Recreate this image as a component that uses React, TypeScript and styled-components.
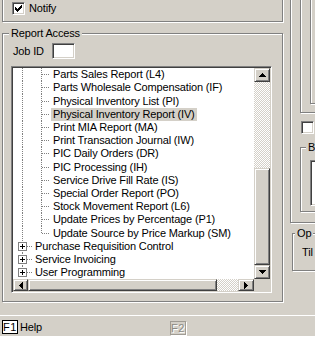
import * as React from 'react';
import styled, { createGlobalStyle, css } from 'styled-components';

const GlobalStyle = createGlobalStyle`
  html, body {
    margin: 0;
    padding: 0;
    background: #fff;
  }
  body {
    font-family: "Liberation Sans", Arial, sans-serif;
    font-size: 11px;
    letter-spacing: -0.15px;
    color: #000;
  }
`;

const FACE = '#d4d0c8';

const Window = styled.div`
  width: 315px;
  height: 336px;
  overflow: hidden;
  background: ${FACE};
  display: flex;
  flex-direction: column;
`;

const Main = styled.div`
  height: 315px;
  flex: none;
  display: flex;
`;

const LeftCol = styled.div`
  width: 285px;
  flex: none;
  display: flex;
  flex-direction: column;
  padding-left: 2px;
  box-sizing: border-box;
`;

const RightCol = styled.div`
  flex: 1;
  overflow: hidden;
  display: flex;
  flex-direction: column;
  padding-left: 5px;
`;

// etched group frame (dark line + white line)
const Etched = styled.div<{ $w: number; $h: number }>`
  position: relative;
  box-sizing: border-box;
  flex: none;
  width: ${p => p.$w}px;
  height: ${p => p.$h}px;
  border: 1px solid #808080;
  box-shadow: inset 1px 1px #fff, 1px 1px #fff;
`;

const GroupLabel = styled.span<{ $left: number }>`
  position: absolute;
  top: -7px;
  left: ${p => p.$left}px;
  padding: 0 2px;
  line-height: 13px;
  background: ${FACE};
  white-space: nowrap;
`;

const sunken = css`
  box-sizing: border-box;
  border: 1px solid;
  border-color: #808080 #fff #fff #808080;
  box-shadow: inset 1px 1px #404040, inset -1px -1px ${FACE};
`;

const raised = css`
  box-sizing: border-box;
  background: ${FACE};
  border: 1px solid;
  border-color: ${FACE} #404040 #404040 ${FACE};
  box-shadow: inset 1px 1px #fff, inset -1px -1px #808080;
`;

const dither = css`
  background-color: #fff;
  background-image: repeating-conic-gradient(${FACE} 0% 25%, #fff 0% 50%);
  background-size: 2px 2px;
`;

/* ---- top group ---- */
const NotifyGroup = styled(Etched)`
  margin-top: -12px;
  padding: 13px 0 0 9px;
`;

const CheckRow = styled.div`
  display: flex;
  align-items: center;
  gap: 4px;
  height: 13px;
  line-height: 13px;
`;

const CheckBox = styled.span<{ $mt?: number; $ml?: number }>`
  ${sunken};
  display: flex;
  align-items: center;
  justify-content: center;
  flex: none;
  width: 13px;
  height: 13px;
  margin-top: ${p => p.$mt || 0}px;
  margin-left: ${p => p.$ml || 0}px;
  background-color: #fff;
`;

/* ---- report access ---- */
const ReportGroup = styled(Etched)`
  margin-top: 11px;
  padding: 9px 0 0 8px;
  display: flex;
  flex-direction: column;
`;

const JobRow = styled.div`
  display: flex;
  align-items: center;
  height: 16px;
`;

const JobLabel = styled.span`
  width: 39px;
  margin-left: 2px;
  line-height: 13px;
`;

const JobInput = styled.div`
  ${sunken};
  width: 23px;
  height: 16px;
  background-color: #fff;
`;

const Tree = styled.div`
  ${sunken};
  margin-top: 7px;
  width: 261px;
  height: 227px;
  padding: 1px;
  background-color: ${FACE};
  display: grid;
  grid-template-columns: 1fr 16px;
  grid-template-rows: 1fr 12px;
`;

const TreeBody = styled.div`
  background: #fff;
  overflow: hidden;
  display: flex;
  flex-direction: column;
`;

const Row = styled.div<{ $h: number }>`
  height: ${p => p.$h}px;
  flex: none;
  display: flex;
  white-space: nowrap;
`;

const Guide = styled.div<{ $w: number; $rh: number; $v: 'full' | 'top'; $hline?: boolean }>`
  position: relative;
  flex: none;
  width: ${p => p.$w}px;

  &::before {
    content: '';
    position: absolute;
    left: 9px;
    top: 0;
    width: 1px;
    height: ${p => (p.$v === 'full' ? `${p.$rh}px` : `${Math.floor(p.$rh / 2) + 1}px`)};
    background-image: linear-gradient(#808080 50%, transparent 50%);
    background-size: 1px 2px;
  }

  &::after {
    content: '';
    display: ${p => (p.$hline ? 'block' : 'none')};
    position: absolute;
    left: 10px;
    right: 1px;
    top: ${p => Math.floor(p.$rh / 2)}px;
    height: 1px;
    background-image: linear-gradient(to right, #808080 50%, transparent 50%);
    background-size: 2px 1px;
  }
`;

const PlusBox = styled.span<{ $rh: number }>`
  position: absolute;
  left: 5px;
  top: ${p => Math.floor(p.$rh / 2) - 4}px;
  width: 9px;
  height: 9px;
  box-sizing: border-box;
  border: 1px solid #808080;
  background: #fff;
  z-index: 1;
  display: flex;
`;

const ItemLabel = styled.span<{ $selected?: boolean }>`
  align-self: center;
  height: 13px;
  line-height: 13px;
  padding: 0 2px;
  background: ${p => (p.$selected ? FACE : 'transparent')};
`;

const VScroll = styled.div`
  display: flex;
  flex-direction: column;
`;

const HScroll = styled.div`
  display: flex;
`;

const ScrollButton = styled.div<{ $w: number; $h: number }>`
  ${raised};
  flex: none;
  width: ${p => p.$w}px;
  height: ${p => p.$h}px;
  display: flex;
  align-items: center;
  justify-content: center;
`;

const Thumb = styled.div<{ $w?: number; $h?: number }>`
  ${raised};
  flex: none;
  width: ${p => (p.$w ? `${p.$w}px` : 'auto')};
  height: ${p => (p.$h ? `${p.$h}px` : 'auto')};
`;

const Track = styled.div`
  ${dither};
  flex: 1;
`;

const Corner = styled.div`
  background: ${FACE};
`;

/* ---- right column ---- */
const OuterBox = styled(Etched)`
  margin-top: -10px;
  padding-left: 9px;
  display: flex;
  flex-direction: column;
`;

const PanelBox = styled(Etched)`
  padding-left: 9px;
`;

const BGroup = styled(Etched)`
  margin-top: 13px;
  padding: 12px 0 0 9px;
`;

const Field = styled.div<{ $w: number; $h: number }>`
  ${sunken};
  width: ${p => p.$w}px;
  height: ${p => p.$h}px;
  background-color: #fff;
`;

const OpGroup = styled(Etched)`
  margin-top: 10px;
  margin-left: 2px;
  padding: 12px 0 0 9px;
  line-height: 13px;
`;

/* ---- status bar ---- */
const Separator = styled.div`
  height: 1px;
  flex: none;
  background: #fff;
`;

const StatusBar = styled.div`
  height: 20px;
  flex: none;
  display: flex;
  align-items: flex-start;
  padding-left: 2px;
`;

const KeyHint = styled.div`
  width: 168px;
  display: flex;
  align-items: center;
  margin-top: 4px;
`;

const KeyCap = styled.span<{ $disabled?: boolean }>`
  box-sizing: border-box;
  width: 16px;
  height: 14px;
  display: flex;
  align-items: center;
  justify-content: center;
  line-height: 12px;
  letter-spacing: 0.5px;
  border: 1px solid ${p => (p.$disabled ? '#a09c94' : '#000')};
  background: ${p => (p.$disabled ? FACE : '#fff')};
  color: ${p => (p.$disabled ? '#8c8a84' : '#000')};
  text-shadow: ${p => (p.$disabled ? '1px 1px #fff' : 'none')};
  box-shadow: ${p => (p.$disabled ? '1px 1px #fff' : 'none')};
  margin-top: ${p => (p.$disabled ? '5px' : '0')};
`;

const HintText = styled.span`
  margin-left: 2px;
  line-height: 13px;
`;

const arrows = {
  up: { w: 7, h: 4, d: 'M3 0h1v1h1v1h1v1h1v1H0V3h1V2h1V1h1z' },
  down: { w: 7, h: 4, d: 'M0 0h7v1H6v1H5v1H4v1H3V3H2V2H1V1H0z' },
  left: { w: 4, h: 7, d: 'M3 0h1v7H3V6H2V5H1V4H0V3h1V2h1V1h1z' },
  right: { w: 4, h: 7, d: 'M0 0h1v1h1v1h1v1h1v1H3v1H2v1H1v1H0z' },
};

const Arrow = ({ dir }: { dir: keyof typeof arrows }) => {
  const a = arrows[dir];
  return (
    <svg width={a.w} height={a.h} viewBox={`0 0 ${a.w} ${a.h}`} shapeRendering="crispEdges">
      <path d={a.d} fill="#000" />
    </svg>
  );
};

const CheckMark = () => (
  <svg width="7" height="7" viewBox="0 0 7 7" shapeRendering="crispEdges">
    <path d="M6 0h1v3H6v1H5v1H4v1H3v1H2V6H1V5H0V2h1v1h1v1h1V3h1V2h1V1h1z" fill="#000" />
  </svg>
);

const Plus = () => (
  <svg width="7" height="7" viewBox="0 0 7 7" shapeRendering="crispEdges">
    <path d="M1 3h5v1H1zM3 1h1v5H3z" fill="#000" />
  </svg>
);

interface TreeItem {
  label: string;
  depth: number;
  last?: boolean;
  expandable?: boolean;
  selected?: boolean;
}

const items: TreeItem[] = [
  { label: 'Parts Sales Report (L4)', depth: 1 },
  { label: 'Parts Wholesale Compensation (IF)', depth: 1 },
  { label: 'Physical Inventory List (PI)', depth: 1 },
  { label: 'Physical Inventory Report (IV)', depth: 1, selected: true },
  { label: 'Print MIA Report (MA)', depth: 1 },
  { label: 'Print Transaction Journal (IW)', depth: 1 },
  { label: 'PIC Daily Orders (DR)', depth: 1 },
  { label: 'PIC Processing (IH)', depth: 1 },
  { label: 'Service Drive Fill Rate (IS)', depth: 1 },
  { label: 'Special Order Report (PO)', depth: 1 },
  { label: 'Stock Movement Report (L6)', depth: 1 },
  { label: 'Update Prices by Percentage (P1)', depth: 1 },
  { label: 'Update Source by Price Markup (SM)', depth: 1, last: true },
  { label: 'Purchase Requisition Control', depth: 0, expandable: true },
  { label: 'Service Invoicing', depth: 0, expandable: true },
  { label: 'User Programming', depth: 0, expandable: true, last: true },
];

const ROW = 13.2;

const App = () => {
  const rows = items.map((item, i) => {
    const h = Math.round((i + 1) * ROW) - Math.round(i * ROW);
    if (item.depth === 0) {
      return (
        <Row key={i} $h={h}>
          <Guide $w={20} $rh={h} $v={item.last ? 'top' : 'full'} $hline>
            {item.expandable && (
              <PlusBox $rh={h}>
                <Plus />
              </PlusBox>
            )}
          </Guide>
          <ItemLabel $selected={item.selected}>{item.label}</ItemLabel>
        </Row>
      );
    }
    return (
      <Row key={i} $h={h}>
        <Guide $w={19} $rh={h} $v="full" />
        <Guide $w={19} $rh={h} $v={item.last ? 'top' : 'full'} $hline />
        <ItemLabel $selected={item.selected}>{item.label}</ItemLabel>
      </Row>
    );
  });

  return (
    <>
      <GlobalStyle />
      <Window>
        <Main>
          <LeftCol>
            <NotifyGroup $w={281} $h={34}>
              <CheckRow>
                <CheckBox>
                  <CheckMark />
                </CheckBox>
                <span>Notify</span>
              </CheckRow>
            </NotifyGroup>

            <ReportGroup $w={281} $h={269}>
              <GroupLabel $left={6}>Report Access</GroupLabel>
              <JobRow>
                <JobLabel>Job ID</JobLabel>
                <JobInput />
              </JobRow>
              <Tree>
                <TreeBody>{rows}</TreeBody>
                <VScroll>
                  <ScrollButton $w={16} $h={14}>
                    <Arrow dir="up" />
                  </ScrollButton>
                  <Track />
                  <Thumb $h={97} />
                  <ScrollButton $w={16} $h={14}>
                    <Arrow dir="down" />
                  </ScrollButton>
                </VScroll>
                <HScroll>
                  <ScrollButton $w={15} $h={12}>
                    <Arrow dir="left" />
                  </ScrollButton>
                  <Thumb $w={189} />
                  <Track />
                  <ScrollButton $w={16} $h={12}>
                    <Arrow dir="right" />
                  </ScrollButton>
                </HScroll>
                <Corner />
              </Tree>
            </ReportGroup>
          </LeftCol>

          <RightCol>
            <OuterBox $w={60} $h={233}>
              <PanelBox $w={50} $h={122}>
                <Etched $w={40} $h={112} />
              </PanelBox>
              <CheckBox $mt={8} $ml={1} />
              <BGroup $w={50} $h={65}>
                <GroupLabel $left={5}>B</GroupLabel>
                <Field $w={40} $h={46} />
              </BGroup>
            </OuterBox>
            <OpGroup $w={60} $h={38}>
              <GroupLabel $left={2}>Op</GroupLabel>
              <span>Til</span>
            </OpGroup>
          </RightCol>
        </Main>

        <Separator />
        <StatusBar>
          <KeyHint>
            <KeyCap>F1</KeyCap>
            <HintText>Help</HintText>
          </KeyHint>
          <KeyCap $disabled>F2</KeyCap>
        </StatusBar>
      </Window>
    </>
  );
};

export default App;
